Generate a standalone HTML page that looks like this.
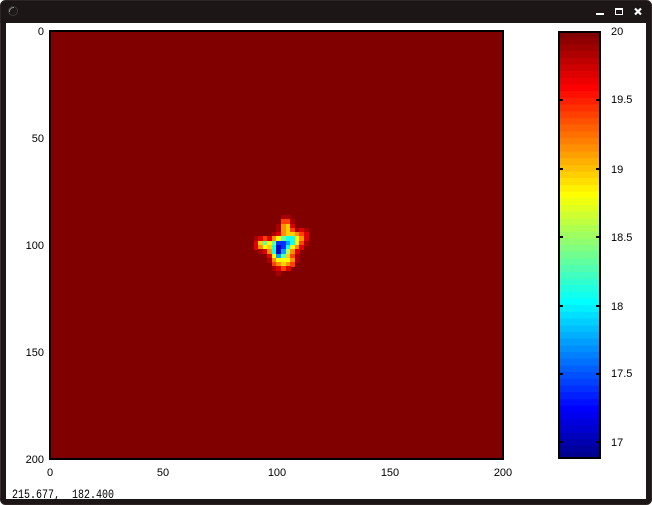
<!DOCTYPE html>
<html>
<head>
<meta charset="utf-8">
<style>
html,body{margin:0;padding:0;background:#fff;width:652px;height:505px;overflow:hidden}
svg{display:block}
text{font-family:"Liberation Sans",sans-serif;font-size:11px;fill:#000}
.m{text-anchor:middle}.e{text-anchor:end}
.cells rect{width:5px;height:5px}
.a{fill:#a80000}.r{fill:#e00000}.R{fill:#ff4000}.o{fill:#ff9000}.O{fill:#ffd000}.y{fill:#ffff00}.G{fill:#c0ff40}.g{fill:#60ffa0}.c{fill:#10ffef}.s{fill:#00a0ff}.b{fill:#0030ff}.B{fill:#0000c0}
</style>
</head>
<body>
<svg width="652" height="505" viewBox="0 0 652 505" xmlns="http://www.w3.org/2000/svg">
<!-- window -->
<rect x="0" y="0" width="652" height="505" fill="#fff"/>
<rect x="0.5" y="0.5" width="651" height="504" rx="5" fill="#1c1716" stroke="#2c2523"/>
<rect x="0" y="23" width="1" height="475" fill="#3a3230"/>
<rect x="6" y="23" width="640" height="476" fill="#fff"/>
<!-- title bar icons -->
<circle cx="13" cy="11" r="4.5" fill="#1c1a19" stroke="#3a3836"/>
<path d="M9.5 12A4 4 0 0 1 14 7.5" fill="none" stroke="#8a8a88" stroke-width="1"/>
<rect x="596" y="13" width="8" height="2" fill="#fff"/>
<path d="M615 8h8v7h-8zM616 10v4h6v-4z" fill="#fff" fill-rule="evenodd"/>
<path d="M635 8.500L641 14.500M641 8.500L635 14.500" stroke="#fff" stroke-width="2.200" fill="none"/>
<!-- main image -->
<g shape-rendering="crispEdges">
<rect x="50" y="31" width="453" height="428" fill="#800000"/>
<g class="cells">
<rect class="a" x="281" y="215"/><rect class="a" x="286" y="215"/>
<rect class="R" x="281" y="219"/><rect class="R" x="286" y="219"/><rect class="a" x="290" y="219"/>
<rect class="a" x="276" y="224"/><rect class="o" x="281" y="224"/><rect class="O" x="286" y="224"/><rect class="r" x="290" y="224"/>
<rect class="a" x="276" y="228"/><rect class="o" x="281" y="228"/><rect class="O" x="286" y="228"/><rect class="R" x="290" y="228"/><rect class="a" x="295" y="228"/><rect class="r" x="299" y="228"/><rect class="a" x="304" y="228"/>
<rect class="a" x="272" y="232"/><rect class="r" x="276" y="232"/><rect class="o" x="281" y="232"/><rect class="O" x="286" y="232"/><rect class="O" x="290" y="232"/><rect class="o" x="295" y="232"/><rect class="R" x="299" y="232"/><rect class="r" x="304" y="232"/>
<rect class="a" x="254" y="236"/><rect class="r" x="258" y="236"/><rect class="R" x="263" y="236"/><rect class="r" x="267" y="236"/><rect class="o" x="272" y="236"/><rect class="y" x="276" y="236"/><rect class="g" x="281" y="236"/><rect class="c" x="286" y="236"/><rect class="c" x="290" y="236"/><rect class="y" x="295" y="236"/><rect class="o" x="299" y="236"/><rect class="r" x="304" y="236"/>
<rect class="r" x="254" y="241"/><rect class="O" x="258" y="241"/><rect class="g" x="263" y="241"/><rect class="y" x="267" y="241"/><rect class="g" x="272" y="241"/><rect class="b" x="276" y="241"/><rect class="b" x="281" y="241"/><rect class="s" x="286" y="241"/><rect class="c" x="290" y="241"/><rect class="y" x="295" y="241"/><rect class="R" x="299" y="241"/><rect class="a" x="304" y="241"/>
<rect class="r" x="254" y="245"/><rect class="o" x="258" y="245"/><rect class="y" x="263" y="245"/><rect class="O" x="267" y="245"/><rect class="c" x="272" y="245"/><rect class="B" x="276" y="245"/><rect class="b" x="281" y="245"/><rect class="c" x="286" y="245"/><rect class="y" x="290" y="245"/><rect class="o" x="295" y="245"/><rect class="r" x="299" y="245"/>
<rect class="a" x="258" y="249"/><rect class="r" x="263" y="249"/><rect class="o" x="267" y="249"/><rect class="c" x="272" y="249"/><rect class="B" x="276" y="249"/><rect class="s" x="281" y="249"/><rect class="G" x="286" y="249"/><rect class="o" x="290" y="249"/><rect class="r" x="295" y="249"/>
<rect class="r" x="267" y="254"/><rect class="y" x="272" y="254"/><rect class="s" x="276" y="254"/><rect class="g" x="281" y="254"/><rect class="O" x="286" y="254"/><rect class="R" x="290" y="254"/><rect class="a" x="295" y="254"/>
<rect class="a" x="267" y="258"/><rect class="o" x="272" y="258"/><rect class="y" x="276" y="258"/><rect class="y" x="281" y="258"/><rect class="y" x="286" y="258"/><rect class="o" x="290" y="258"/><rect class="a" x="295" y="258"/>
<rect class="R" x="272" y="262"/><rect class="o" x="276" y="262"/><rect class="O" x="281" y="262"/><rect class="o" x="286" y="262"/><rect class="R" x="290" y="262"/>
<rect class="a" x="272" y="266"/><rect class="r" x="276" y="266"/><rect class="R" x="281" y="266"/><rect class="r" x="286" y="266"/>
<rect class="a" x="276" y="271"/>
</g>
<!-- colorbar -->
<svg x="558" y="31" width="43" height="428" viewBox="0 0 1 64" preserveAspectRatio="none">
<rect y="0" width="1" height="1.100" fill="#800000"/><rect y="1" width="1" height="1.100" fill="#900000"/><rect y="2" width="1" height="1.100" fill="#9f0000"/><rect y="3" width="1" height="1.100" fill="#af0000"/><rect y="4" width="1" height="1.100" fill="#bf0000"/><rect y="5" width="1" height="1.100" fill="#cf0000"/><rect y="6" width="1" height="1.100" fill="#df0000"/><rect y="7" width="1" height="1.100" fill="#ef0000"/>
<rect y="8" width="1" height="1.100" fill="#ff0000"/><rect y="9" width="1" height="1.100" fill="#ff1000"/><rect y="10" width="1" height="1.100" fill="#ff2000"/><rect y="11" width="1" height="1.100" fill="#ff3000"/><rect y="12" width="1" height="1.100" fill="#ff4000"/><rect y="13" width="1" height="1.100" fill="#ff5000"/><rect y="14" width="1" height="1.100" fill="#ff6000"/><rect y="15" width="1" height="1.100" fill="#ff7000"/>
<rect y="16" width="1" height="1.100" fill="#ff8000"/><rect y="17" width="1" height="1.100" fill="#ff8f00"/><rect y="18" width="1" height="1.100" fill="#ff9f00"/><rect y="19" width="1" height="1.100" fill="#ffaf00"/><rect y="20" width="1" height="1.100" fill="#ffbf00"/><rect y="21" width="1" height="1.100" fill="#ffcf00"/><rect y="22" width="1" height="1.100" fill="#ffdf00"/><rect y="23" width="1" height="1.100" fill="#ffef00"/>
<rect y="24" width="1" height="1.100" fill="#ffff00"/><rect y="25" width="1" height="1.100" fill="#efff10"/><rect y="26" width="1" height="1.100" fill="#dfff20"/><rect y="27" width="1" height="1.100" fill="#cfff30"/><rect y="28" width="1" height="1.100" fill="#bfff40"/><rect y="29" width="1" height="1.100" fill="#afff50"/><rect y="30" width="1" height="1.100" fill="#9fff60"/><rect y="31" width="1" height="1.100" fill="#8fff70"/>
<rect y="32" width="1" height="1.100" fill="#80ff80"/><rect y="33" width="1" height="1.100" fill="#70ff8f"/><rect y="34" width="1" height="1.100" fill="#60ff9f"/><rect y="35" width="1" height="1.100" fill="#50ffaf"/><rect y="36" width="1" height="1.100" fill="#40ffbf"/><rect y="37" width="1" height="1.100" fill="#30ffcf"/><rect y="38" width="1" height="1.100" fill="#20ffdf"/><rect y="39" width="1" height="1.100" fill="#10ffef"/>
<rect y="40" width="1" height="1.100" fill="#00ffff"/><rect y="41" width="1" height="1.100" fill="#00efff"/><rect y="42" width="1" height="1.100" fill="#00dfff"/><rect y="43" width="1" height="1.100" fill="#00cfff"/><rect y="44" width="1" height="1.100" fill="#00bfff"/><rect y="45" width="1" height="1.100" fill="#00afff"/><rect y="46" width="1" height="1.100" fill="#009fff"/><rect y="47" width="1" height="1.100" fill="#008fff"/>
<rect y="48" width="1" height="1.100" fill="#0080ff"/><rect y="49" width="1" height="1.100" fill="#0070ff"/><rect y="50" width="1" height="1.100" fill="#0060ff"/><rect y="51" width="1" height="1.100" fill="#0050ff"/><rect y="52" width="1" height="1.100" fill="#0040ff"/><rect y="53" width="1" height="1.100" fill="#0030ff"/><rect y="54" width="1" height="1.100" fill="#0020ff"/><rect y="55" width="1" height="1.100" fill="#0010ff"/>
<rect y="56" width="1" height="1.100" fill="#0000ff"/><rect y="57" width="1" height="1.100" fill="#0000ef"/><rect y="58" width="1" height="1.100" fill="#0000df"/><rect y="59" width="1" height="1.100" fill="#0000cf"/><rect y="60" width="1" height="1.100" fill="#0000bf"/><rect y="61" width="1" height="1.100" fill="#0000af"/><rect y="62" width="1" height="1.100" fill="#00009f"/><rect y="63" width="1" height="1" fill="#00008f"/>
</svg>
<!-- main frame -->
<path d="M49 30h455v2h-455zM49 458h455v2h-455zM49 30h2v430h-2zM502 30h2v430h-2z" fill="#000"/>
<!-- colorbar frame + ticks -->
<path d="M558 31h43v2h-43zM558 457h43v2h-43zM558 31h2v428h-2zM599 31h2v428h-2z" fill="#000"/>
<path d="M560 99h3v2h-3zM596 99h3v2h-3zM560 168h3v2h-3zM596 168h3v2h-3zM560 236h3v2h-3zM596 236h3v2h-3zM560 305h3v2h-3zM596 305h3v2h-3zM560 373h3v2h-3zM596 373h3v2h-3zM560 441h3v2h-3zM596 441h3v2h-3z" fill="#000"/>
</g>
<!-- y axis labels -->
<text class="e" x="44" y="35">0</text>
<text class="e" x="44" y="142">50</text>
<text class="e" x="44" y="249">100</text>
<text class="e" x="44" y="356">150</text>
<text class="e" x="44" y="463">200</text>
<!-- x axis labels -->
<text class="m" x="50" y="476">0</text>
<text class="m" x="163" y="476">50</text>
<text class="m" x="277" y="476">100</text>
<text class="m" x="390" y="476">150</text>
<text class="m" x="503" y="476">200</text>
<!-- colorbar labels -->
<text x="611" y="35">20</text>
<text x="611" y="103">19.5</text>
<text x="611" y="173">19</text>
<text x="611" y="241">18.5</text>
<text x="611" y="310">18</text>
<text x="611" y="377">17.5</text>
<text x="611" y="446">17</text>
<!-- status -->
<text transform="translate(12,498) scale(1,1.3)" xml:space="preserve" style="font-family:'Liberation Mono',monospace;font-size:10px" textLength="102" lengthAdjust="spacing">215.677,  182.400</text>
</svg>
</body>
</html>
